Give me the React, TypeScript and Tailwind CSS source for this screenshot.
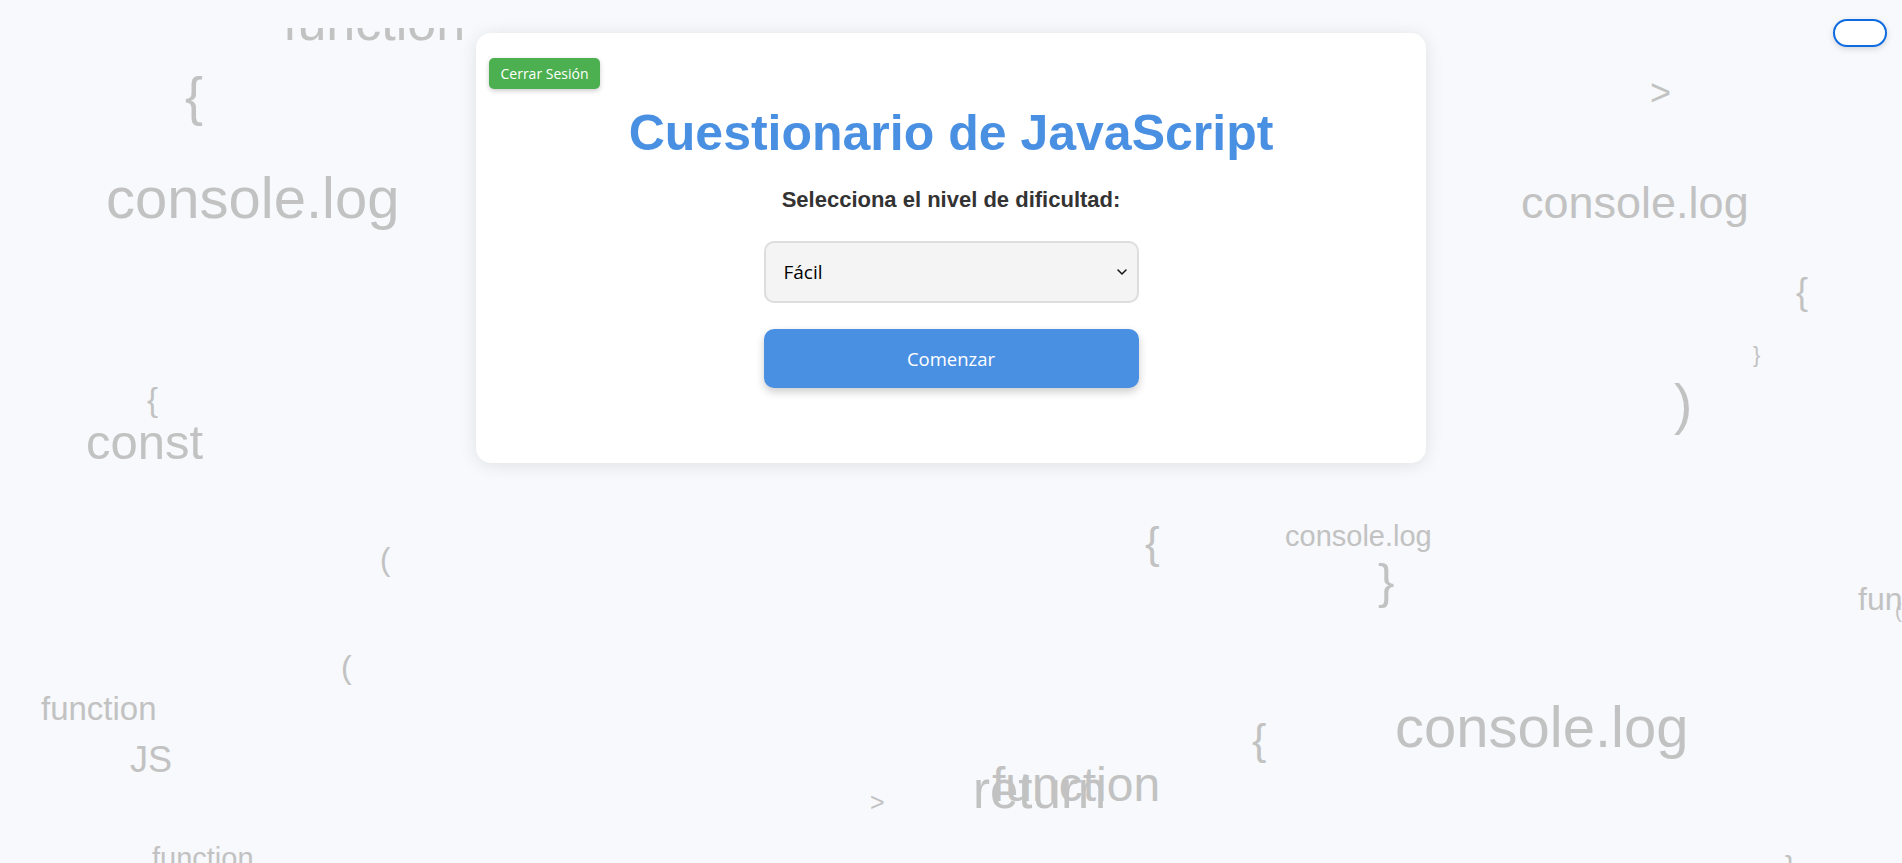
import React from "react";

const floatingWords = [
  { text: "function", cls: "left-[283px] top-[-32px] text-[52px]" },
  { text: "{", cls: "left-[185px] top-[41px] text-[54px]" },
  { text: "console.log", cls: "left-[106px] top-[141px] text-[58px]" },
  { text: "{", cls: "left-[147px] top-[355px] text-[33px]" },
  { text: "const", cls: "left-[86px] top-[390px] text-[49px]" },
  { text: ">", cls: "left-[1650px] top-[47px] text-[36px]" },
  { text: "console.log", cls: "left-[1521px] top-[152px] text-[45px]" },
  { text: "{", cls: "left-[1796px] top-[246px] text-[36px]" },
  { text: "}", cls: "left-[1753px] top-[316px] text-[22px]" },
  { text: ")", cls: "left-[1674px] top-[349px] text-[55px]" },
  { text: "(", cls: "left-[380px] top-[516px] text-[31px]" },
  { text: "(", cls: "left-[341px] top-[623px] text-[32px]" },
  { text: "function", cls: "left-[41px] top-[664px] text-[33px]" },
  { text: "JS", cls: "left-[130px] top-[714px] text-[36px]" },
  { text: "function", cls: "left-[152px] top-[816px] text-[29px]" },
  { text: "{", cls: "left-[1145px] top-[493px] text-[44px]" },
  { text: "{", cls: "left-[1252px] top-[690px] text-[43px]" },
  { text: ">", cls: "left-[870px] top-[762px] text-[25px]" },
  { text: "function", cls: "left-[992px] top-[733px] text-[48px]" },
  { text: "return", cls: "left-[973px] top-[737px] text-[51px]" },
  { text: "console.log", cls: "left-[1285px] top-[494px] text-[29px]" },
  { text: "}", cls: "left-[1378px] top-[529px] text-[49px]" },
  { text: "function", cls: "left-[1858px] top-[555px] text-[32px]" },
  { text: "(", cls: "left-[1895px] top-[573px] text-[20px]" },
  { text: "console.log", cls: "left-[1395px] top-[670px] text-[58px]" },
  { text: "}", cls: "left-[1785px] top-[824px] text-[30px]" },
];

function CodeBackground() {
  return (
    <div className="pointer-events-none absolute inset-x-0 bottom-0 top-[28px] overflow-hidden">
      {floatingWords.map((w, i) => (
        <span
          key={i}
          className={`absolute whitespace-nowrap leading-none text-[#c2c2c2] font-['Liberation_Sans',Arial,sans-serif] ${w.cls}`}
        >
          {w.text}
        </span>
      ))}
    </div>
  );
}

export default function App() {
  return (
    <div className="relative h-[863px] w-full overflow-hidden bg-[#f7f9fc] font-['Open_Sans',sans-serif]">
      <CodeBackground />

      <button className="absolute right-[15px] top-[19px] z-20 h-[28px] w-[54px] rounded-full border-2 border-[#0d6ae0] bg-white shadow-[0_2px_6px_rgba(0,0,0,0.15)]" />

      <div className="relative z-10 mx-auto mt-[33px] flex w-[950px] flex-col items-center rounded-[15px] bg-white px-[13px] pb-[75px] pt-[25px] shadow-[0_2px_18px_rgba(0,0,0,0.1)]">
        <button className="self-start h-[31px] w-[111px] rounded-[5px] bg-[#4caf50] text-[14px] leading-none text-white shadow-[0_2px_5px_rgba(0,0,0,0.2)]">
          Cerrar Sesión
        </button>

        <h1 className="mt-[19px] h-[50px] text-[50px] font-bold leading-none text-[#4a90e2] font-['Liberation_Sans',Arial,sans-serif]">
          Cuestionario de JavaScript
        </h1>

        <p className="mt-[31px] h-[22px] text-[22px] font-bold leading-none text-[#333] font-['Liberation_Sans',Arial,sans-serif]">
          Selecciona el nivel de dificultad:
        </p>

        <div className="relative mt-[30px] w-[375px]">
          <select className="h-[62px] w-full appearance-none rounded-[10px] border-2 border-[#dddddd] bg-[#f4f4f4] pl-[18px] text-[19px] text-black outline-none">
            <option>Fácil</option>
            <option>Intermedio</option>
            <option>Difícil</option>
          </select>
          <svg
            className="pointer-events-none absolute right-[12px] top-[28px]"
            width="10"
            height="6"
            viewBox="0 0 10 6"
            fill="none"
          >
            <path d="M1 1l4 4 4-4" stroke="#111" strokeWidth="1.5" strokeLinecap="round" strokeLinejoin="round" />
          </svg>
        </div>

        <button className="mt-[26px] h-[59px] w-[375px] rounded-[10px] bg-[#4a90e2] text-[18.5px] text-white shadow-[0_4px_8px_rgba(0,0,0,0.2)]">
          Comenzar
        </button>
      </div>
    </div>
  );
}
